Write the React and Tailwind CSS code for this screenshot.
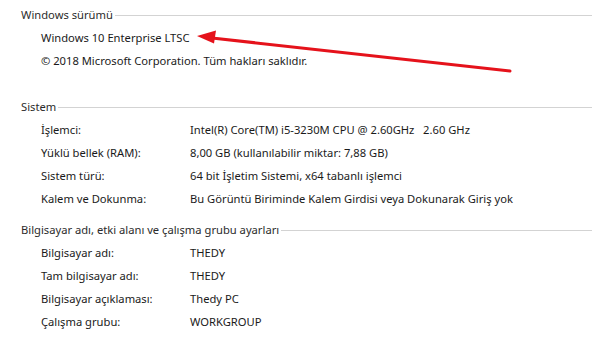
import React from "react";

const font = { fontFamily: '"Noto Sans", "Open Sans", sans-serif' };

function Header({ children }) {
  return (
    <div className="flex items-center h-[23px] pl-[21px]">
      <span className="text-[#2b2b2b] whitespace-nowrap pr-[2px]">{children}</span>
      <div className="flex-1 h-px bg-[#d3d3d3] mt-[1px]"></div>
    </div>
  );
}

function Row({ label, value }) {
  return (
    <div className="flex items-center h-[23px] pl-[41px] whitespace-pre">
      <span className="w-[149px] text-[#1a1a1a]">{label}</span>
      <span className="text-[#1a1a1a]">{value}</span>
    </div>
  );
}

function Line({ children }) {
  return (
    <div className="flex items-center h-[23px] pl-[41px] whitespace-nowrap text-[#1a1a1a]">
      {children}
    </div>
  );
}

export default function App() {
  return (
    <div
      className="relative w-[592px] h-[343px] bg-white overflow-hidden text-[11.2px] leading-none pt-[3px]"
      style={font}
    >
      <Header>Windows sürümü</Header>
      <Line>Windows 10 Enterprise LTSC</Line>
      <Line>© 2018 Microsoft Corporation. Tüm hakları saklıdır.</Line>
      <div className="h-[23px]"></div>
      <Header>Sistem</Header>
      <Row label="İşlemci:" value="Intel(R) Core(TM) i5-3230M CPU @ 2.60GHz   2.60 GHz" />
      <Row label="Yüklü bellek (RAM):" value="8,00 GB (kullanılabilir miktar: 7,88 GB)" />
      <Row label="Sistem türü:" value="64 bit İşletim Sistemi, x64 tabanlı işlemci" />
      <Row label="Kalem ve Dokunma:" value="Bu Görüntü Biriminde Kalem Girdisi veya Dokunarak Giriş yok" />
      <div className="h-[8px]"></div>
      <Header>Bilgisayar adı, etki alanı ve çalışma grubu ayarları</Header>
      <Row label="Bilgisayar adı:" value="THEDY" />
      <Row label="Tam bilgisayar adı:" value="THEDY" />
      <Row label="Bilgisayar açıklaması:" value="Thedy PC" />
      <Row label="Çalışma grubu:" value="WORKGROUP" />

      <svg
        className="absolute left-0 top-0 pointer-events-none"
        width="592"
        height="343"
        viewBox="0 0 592 343"
      >
        <line x1="510" y1="71" x2="212" y2="38" stroke="#e5121b" strokeWidth="3" strokeLinecap="round" />
        <polygon points="197,36 216,30.5 214,43.5" fill="#e5121b" />
      </svg>
    </div>
  );
}
